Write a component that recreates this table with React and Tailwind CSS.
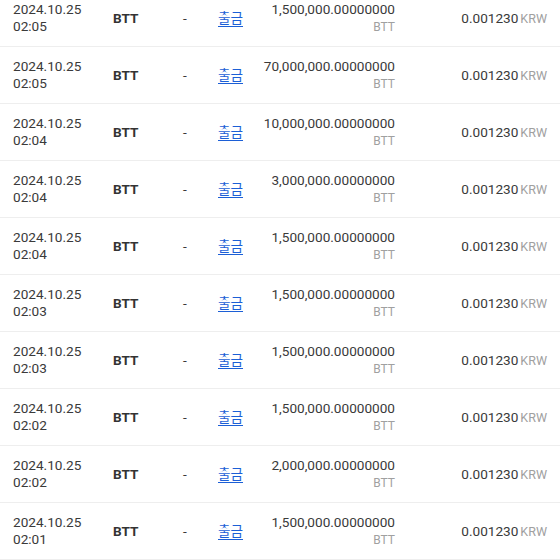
const rows = [
  { time: '02:05', amount: '1,500,000.00000000' },
  { time: '02:05', amount: '70,000,000.00000000' },
  { time: '02:04', amount: '10,000,000.00000000' },
  { time: '02:04', amount: '3,000,000.00000000' },
  { time: '02:04', amount: '1,500,000.00000000' },
  { time: '02:03', amount: '1,500,000.00000000' },
  { time: '02:03', amount: '1,500,000.00000000' },
  { time: '02:02', amount: '1,500,000.00000000' },
  { time: '02:02', amount: '2,000,000.00000000' },
  { time: '02:01', amount: '1,500,000.00000000' },
];

export default function App() {
  return (
    <div className="w-[560px] h-[560px] overflow-hidden bg-white font-['Roboto','Noto_Sans_CJK_KR',sans-serif] text-[13.6px] text-[#3a3a3a]">
      <div className="-mt-[10px]">
        {rows.map((row, i) => (
          <div key={i} className="flex items-center h-[57px] border-b border-[#eeeeee]">
            {/* date */}
            <div className="w-[113px] pl-[13px] leading-[17px]">
              <div>2024.10.25</div>
              <div>{row.time}</div>
            </div>
            {/* coin */}
            <div className="w-[70px] font-bold text-[#333]">BTT</div>
            {/* network */}
            <div className="w-[35px]">-</div>
            {/* type */}
            <div className="w-[40px]">
              <a href="#" className="text-[#1c5fd6] underline underline-offset-[3px] font-['Noto_Sans_CJK_KR',sans-serif]">출금</a>
            </div>
            {/* amount */}
            <div className="w-[137px] text-right leading-[17px]">
              <div>{row.amount}</div>
              <div className="mt-[1px] text-[12px] text-[#a0a0a0]">BTT</div>
            </div>
            {/* price */}
            <div className="w-[152px] text-right whitespace-nowrap">
              0.001230<span className="ml-[2px] text-[12.5px] text-[#a0a0a0]">KRW</span>
            </div>
          </div>
        ))}
      </div>
    </div>
  );
}
